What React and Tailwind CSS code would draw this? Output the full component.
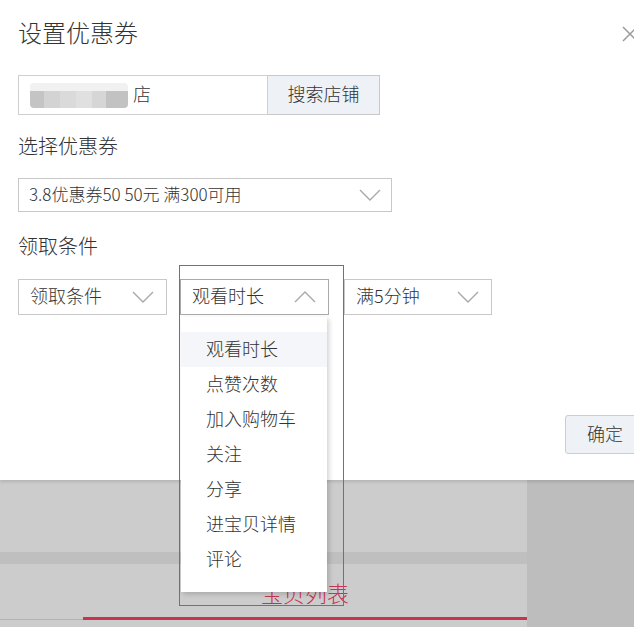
import React from "react";

const FONT = { fontFamily: '"Noto Sans CJK SC", "Liberation Sans", sans-serif' };

function Chevron({ up = false }) {
  return (
    <svg width="22" height="12" viewBox="0 0 22 12" className="shrink-0">
      <polyline
        points={up ? "1,11 11,1 21,11" : "1,1 11,11 21,1"}
        fill="none"
        stroke="#a8a8a8"
        strokeWidth="1.4"
      />
    </svg>
  );
}

function Select({ text, width, up = false, dark = false }) {
  return (
    <div
      className={`flex h-[36px] items-center justify-between border bg-white pl-[11px] pr-[12px] text-[18px] text-[#333] ${
        dark ? "border-[#a9a9a9]" : "border-[#c8c8c8]"
      } ${width}`}
    >
      <span className="pb-[4px] leading-none">{text}</span>
      <Chevron up={up} />
    </div>
  );
}

const items = ["观看时长", "点赞次数", "加入购物车", "关注", "分享", "进宝贝详情", "评论"];

export default function App() {
  return (
    <div className="relative h-[627px] w-[634px] overflow-hidden bg-white font-light" style={FONT}>
      {/* Modal */}
      <div className="relative z-10 h-[480px] w-[660px] bg-white pl-[18px] pt-[20px] shadow-[0_2px_3px_rgba(0,0,0,0.12)]">
        <div className="flex h-[28px] items-center justify-between pr-[22px]">
          <span className="pb-[5px] text-[24px] leading-[28px] text-[#333]">设置优惠券</span>
          <svg width="16" height="16" viewBox="0 0 16 16">
            <path d="M1 1 L15 15 M15 1 L1 15" stroke="#9a9a9a" strokeWidth="1.5" fill="none" />
          </svg>
        </div>

        {/* search row */}
        <div className="mt-[27px] flex h-[40px]">
          <div className="flex w-[250px] items-center border border-[#cfcfcf] bg-white">
            <div className="ml-[11px] flex h-[25px] w-[98px] flex-col overflow-hidden rounded-[4px]">
              <div className="h-[8px] bg-[#f1f1f1]" />
              <div className="flex h-[17px]">
                <div className="w-[14px] bg-[#c4c4c4]" />
                <div className="w-[16px] bg-[#d3d3d3]" />
                <div className="w-[16px] bg-[#dadada]" />
                <div className="w-[16px] bg-[#e0e0e0]" />
                <div className="w-[14px] bg-[#d6d6d6]" />
                <div className="w-[22px] bg-[#c2c2c2]" />
              </div>
            </div>
            <span className="ml-[5px] pb-[4px] text-[18px] leading-none text-[#333]">店</span>
          </div>
          <div className="flex w-[112px] items-center justify-center border border-l-0 border-[#c8c8c8] bg-[#eef1f5] text-[18px] text-[#333]">
            <span className="pb-[4px] leading-none">搜索店铺</span>
          </div>
        </div>

        <div className="mt-[19px] h-[25px] text-[20px] leading-[24px] text-[#333]">选择优惠券</div>

        <div className="mt-[19px] flex h-[34px] w-[374px] items-center justify-between border border-[#c8c8c8] pl-[10px] pr-[10px] text-[17px] text-[#333]">
          <span className="pb-[4px] leading-none">3.8优惠券50 50元 满300可用</span>
          <Chevron />
        </div>

        <div className="mt-[22px] h-[25px] text-[20px] leading-[24px] text-[#333]">领取条件</div>

        <div className="mt-[20px] flex">
          <Select text="领取条件" width="w-[149px]" />
          <div className="relative ml-[13px]">
            <Select text="观看时长" width="w-[149px]" up dark />
            {/* dropdown */}
            <div className="absolute left-[1px] top-[38px] z-20 w-[146px] bg-white pb-[15px] pt-[15px] shadow-[2px_2px_5px_rgba(0,0,0,0.18)]">
              {items.map((t, i) => (
                <div
                  key={t}
                  className={`flex h-[35px] items-center pl-[25px] text-[18px] text-[#333] ${
                    i === 0 ? "bg-[#f4f6f9]" : ""
                  }`}
                >
                  <span className="pb-[3px] leading-none">{t}</span>
                </div>
              ))}
            </div>
            {/* red annotation box */}
            <div className="pointer-events-none absolute left-[-1px] top-[-14px] z-30 h-[341px] w-[165px] border border-[#e0414f]" />
          </div>
          <div className="ml-[15px]">
            <Select text="满5分钟" width="w-[148px]" />
          </div>
        </div>

        <div className="ml-[547px] mt-[100px] flex h-[39px] w-[80px] items-center justify-center rounded-[3px] border border-[#cdcdcd] bg-[#eef1f5] text-[18px] text-[#333]">
          <span className="pb-[4px] leading-none">确定</span>
        </div>
      </div>

      {/* Background page below */}
      <div className="flex h-[147px]">
        <div className="flex w-[527px] flex-col">
          <div className="h-[72px] bg-[#cccccc]" />
          <div className="h-[12px] bg-[#bfbfbf]" />
          <div className="flex h-[63px] bg-[#cccccc]">
            <div className="h-[56px] w-[83px] border-b border-[#b3b3b3]" />
            <div className="flex h-[56px] w-[444px] items-start justify-center border-b-[3px] border-[#c8344f] pt-[15px] text-[22px] leading-[26px] text-[#c8344f]">
              宝贝列表
            </div>
          </div>
        </div>
        <div className="flex-1 bg-[#bdbdbd]" />
      </div>
    </div>
  );
}
